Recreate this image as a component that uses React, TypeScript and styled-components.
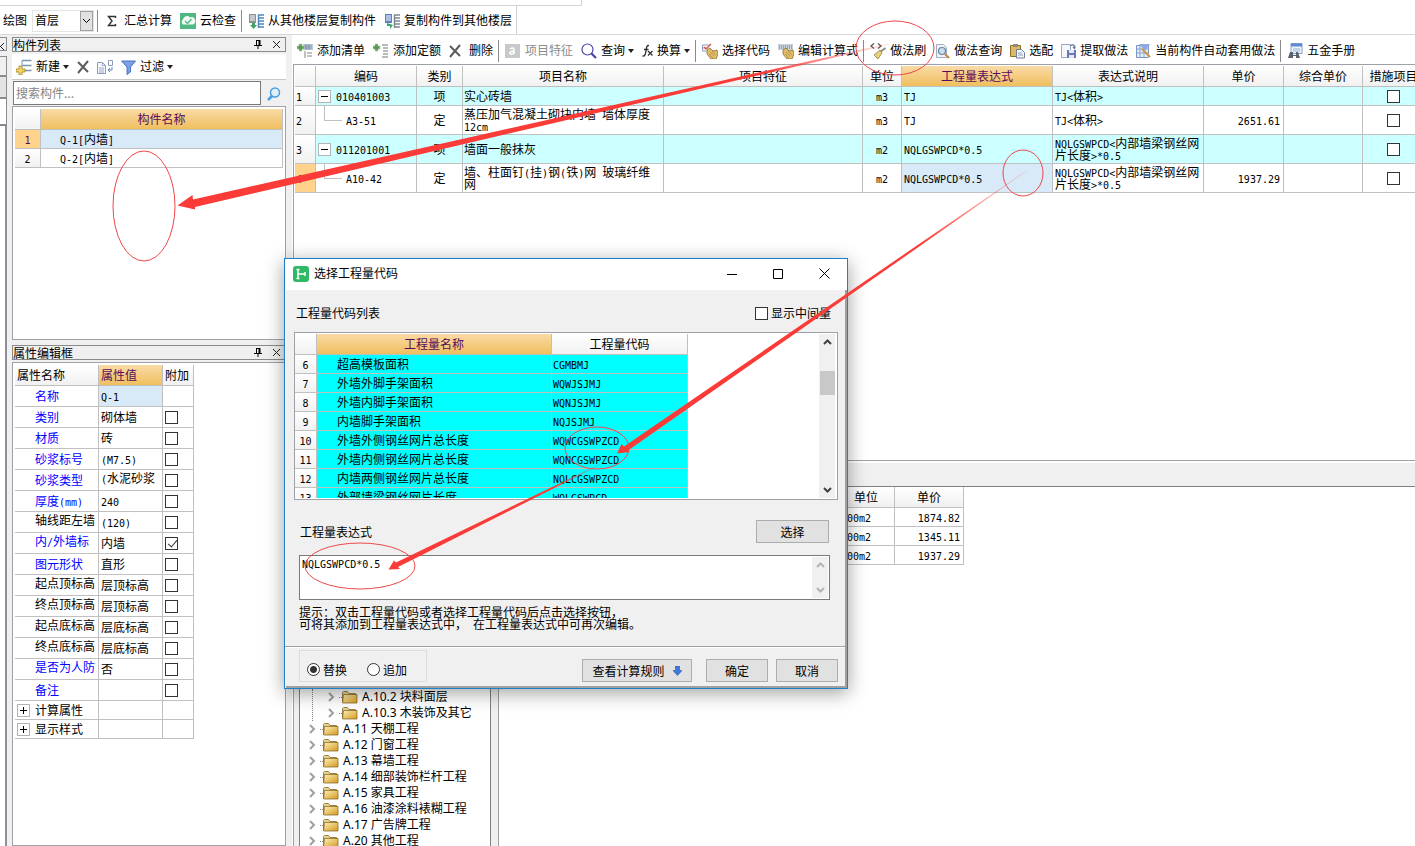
import React from "react";
import styled, { createGlobalStyle, css } from "styled-components";

const ui = '"Noto Sans", "Noto Sans CJK SC", sans-serif';
const song = '"Noto Sans CJK SC", "Noto Sans", sans-serif';
const mono = '"DejaVu Sans Mono", "Liberation Mono", monospace';
const line = "#c0c0c0";
const red = "#fb3b37";

const GlobalStyle = createGlobalStyle`
  * { box-sizing: border-box; }
  body { margin: 0; background: #fff; color: #000; font: 12px/14px ${song}; overflow: hidden; }
  button, input, select, textarea { font: inherit; color: inherit; margin: 0; }
`;

/* ---------- shared text ---------- */

const Latin = styled.span`
  font-family: ${mono};
  font-size: 10px;
  line-height: 0;
`;

function Mix({ children }: { children: string }) {
  const parts = children.split(/([\x20-\x7e]+)/).filter(Boolean);
  return (
    <>
      {parts.map((p, i) => (/^[\x20-\x7e]/.test(p) ? <Latin key={i}>{p}</Latin> : p))}
    </>
  );
}

/* ---------- shell ---------- */

const Page = styled.div`
  position: relative;
  display: flex;
  flex-direction: column;
  height: 100vh;
  overflow: hidden;
`;

const TopStrip = styled.div`
  flex: none;
  width: 582px;
  height: 6px;
  border: 1px solid #d4d4d4;
  border-width: 0 1px 1px 0;
`;

const Toolbar = styled.div`
  flex: none;
  display: flex;
  align-items: center;
  background: #fff;
  font-family: ${ui};
  white-space: nowrap;
`;

const FloorBar = styled(Toolbar)`
  height: 29px;
  border-bottom: 1px solid #d9d9d9;
`;

const FloorGroup = styled(Toolbar)`
  height: 28px;
  padding: 2px 0 0 3px;
  border-right: 1px solid #d0d0d0;
`;

const MainBar = styled(Toolbar)`
  height: 29px;
  padding: 2px 0 0 1px;
`;

const PanelBar = styled(Toolbar)`
  height: 26px;
  border-bottom: 1px solid #c8c8c8;
`;

const ToolButton = styled.button`
  display: flex;
  align-items: center;
  gap: 4px;
  height: 22px;
  padding: 0 4px;
  border: 0;
  background: none;
  &:disabled { color: #8c8c8c; }
`;

const Caret = styled.i`
  margin-left: -1px;
  border: solid transparent;
  border-width: 4px 3px 0;
  border-top-color: #222;
`;

const Separator = styled.i`
  width: 1px;
  height: 22px;
  margin: 0 2px 0 1px;
  background: #8a8a8a;
`;

const FloorLabel = styled.label`
  display: flex;
  align-items: center;
  gap: 5px;
  margin-right: 2px;
`;

const SelectBox = styled.span`
  display: flex;
  width: 62px;
  height: 22px;
  border: 1px solid #e4e4e4;
`;

const FloorSelect = styled.select`
  flex: 1;
  min-width: 0;
  padding: 0 2px;
  border: 0;
  background: #fff;
  appearance: none;
`;

const SelectArrow = styled.span`
  display: grid;
  place-items: center;
  width: 13px;
  border: 1px solid #a0a0a0;
  background: #e1e1e1;
`;

const Body = styled.div`
  flex: 1;
  min-height: 0;
  display: flex;
  background: #f0f0f0;
`;

/* ---------- cut-off dock at the far left ---------- */

const Dock = styled.div`
  flex: none;
  display: flex;
  flex-direction: column;
  width: 12px;
  padding: 2px 5px 0 0;
`;

const DockBox = styled.div<{ $h: number; $bg: string }>`
  flex: none;
  height: ${(p) => p.$h}px;
  border: 1px solid #8c8c8c;
  border-left: 0;
  background: ${(p) => p.$bg};
  overflow: hidden;
`;

const DockFill = styled.div`
  flex: 1;
  border-top: 1px solid #80808a;
  border-right: 2px solid #90909a;
  background: #fff;
`;

/* ---------- left column ---------- */

const Side = styled.div`
  flex: none;
  display: flex;
  flex-direction: column;
  width: 274px;
  padding-top: 2px;
`;

const PanelTitle = styled.h2`
  flex: none;
  display: flex;
  align-items: center;
  gap: 9px;
  height: 15px;
  margin: 0 0 2px;
  padding-right: 4px;
  border: 1px solid #8a8a8a;
  font-size: 12px;
  font-weight: 400;
  line-height: 13px;
  & > span { flex: 1; }
`;

const TitleIcon = styled.button`
  display: flex;
  width: 9px;
  height: 9px;
  padding: 0;
  border: 0;
  background: none;
`;

const SearchRow = styled.div`
  flex: none;
  display: flex;
  height: 26px;
  padding: 1px 0 0 1px;
`;

const SearchInput = styled.input`
  flex: 1;
  min-width: 0;
  height: 24px;
  padding: 0 2px 2px;
  border: 1px solid #7a7a7a;
  background: #fff;
  border-radius: 0;
  &::placeholder { color: #858585; opacity: 1; }
`;

const SearchButton = styled.button`
  display: grid;
  place-items: center;
  width: 25px;
  padding: 0;
  border: 0;
  background: #f0f0f0;
`;

const Frame = styled.div<{ $h?: number }>`
  ${(p) => (p.$h ? css`flex: none; height: ${p.$h}px;` : css`flex: 1; min-height: 0;`)}
  padding: 2px;
  border: 1px solid #a0a0a8;
  background: #fff;
  overflow: hidden;
`;

const SideGap = styled.div`
  flex: none;
  height: 5px;
`;

/* ---------- tables ---------- */

const Grid = styled.table<{ $w: number }>`
  width: ${(p) => p.$w}px;
  table-layout: fixed;
  border-collapse: separate;
  border-spacing: 0;
`;

const Head = styled.th<{ $active?: boolean; $left?: boolean }>`
  height: 21px;
  padding: 0 2px;
  border: solid ${line};
  border-width: 0 1px 1px 0;
  background: ${(p) =>
    p.$active ? "linear-gradient(#f9dba6, #f0bf5e)" : "linear-gradient(#fff, #f1f1f1)"};
  color: ${(p) => (p.$active ? "#5a0a5a" : "#000")};
  font-weight: 400;
  text-align: ${(p) => (p.$left ? "left" : "center")};
  white-space: nowrap;
  overflow: hidden;
`;

const Row = styled.tr<{ $h: number; $bg?: string }>`
  height: ${(p) => p.$h}px;
  background: ${(p) => p.$bg || "#fff"};
`;

const Cell = styled.td<{
  $align?: string;
  $pad?: number;
  $bg?: string;
  $color?: string;
  $clip?: boolean;
}>`
  padding: 0 ${(p) => (p.$align === "right" ? 3 : p.$align ? 0 : 2)}px 0 ${(p) => p.$pad ?? 2}px;
  border: solid ${line};
  border-width: 0 1px 1px 0;
  background: ${(p) => p.$bg || "transparent"};
  color: ${(p) => p.$color || "#000"};
  font-size: 12px;
  line-height: 12px;
  text-align: ${(p) => p.$align || "left"};
  vertical-align: ${(p) => (p.$clip ? "top" : "middle")};
  overflow: hidden;
  ${(p) => p.$clip && css`padding-top: 2px; white-space: nowrap;`}
`;

const RowNumber = styled(Cell)<{ $active?: boolean; $edge?: boolean }>`
  padding: 0 ${(p) => (p.$edge ? 12 : 0)}px 0 0;
  background: ${(p) => (p.$active ? "#ffd38c" : "linear-gradient(#fff, #f1f1f1)")};
  text-align: center;
`;

const CodeCell = styled.div<{ $child?: boolean }>`
  position: relative;
  display: flex;
  align-items: center;
  gap: 5px;
  padding-left: ${(p) => (p.$child ? 30 : 2)}px;
  ${(p) =>
    p.$child &&
    css`
      &::before {
        content: "";
        position: absolute;
        left: 8px;
        top: -16px;
        width: 17px;
        height: 22px;
        border: solid ${line};
        border-width: 0 0 1px 1px;
      }
    `}
`;

const ExpandBox = styled.button`
  position: relative;
  display: grid;
  place-items: center;
  width: 13px;
  height: 13px;
  padding: 0;
  border: 1px solid #b4b4b4;
  background: #fff;
`;

const GroupName = styled.div`
  display: flex;
  align-items: center;
  gap: 5px;
`;

const Check = styled.input`
  position: relative;
  display: inline-block;
  width: 13px;
  height: 13px;
  border: 1px solid #333;
  background: #fff;
  appearance: none;
  vertical-align: middle;
  &:checked::after {
    content: "";
    position: absolute;
    left: 4px;
    top: 0;
    width: 4px;
    height: 8px;
    border: solid #333;
    border-width: 0 1px 1px 0;
    transform: rotate(40deg);
  }
`;

/* ---------- main column ---------- */

const Main = styled.main`
  flex: 1;
  min-width: 0;
  display: flex;
  flex-direction: column;
  margin-left: 6px;
  background: #fff;
`;

const Upper = styled.section`
  flex: none;
  height: 397px;
  border: 1px solid #a0a0a8;
  border-right: 0;
  padding: 1px 0 0 1px;
  margin-left: 1px;
  overflow: hidden;
`;

const LowerBar = styled.div`
  flex: none;
  height: 26px;
  margin-left: 1px;
  border-top: 2px solid #fff;
  border-bottom: 1px solid #808080;
  background: #f0f0f0;
`;

const Lower = styled.section`
  flex: 1;
  min-height: 0;
  display: flex;
  margin-left: 1px;
  padding-left: 5px;
  border-left: 1px solid #a0a0a0;
  background: #f0f0f0;
`;

const TreePane = styled.nav`
  flex: none;
  width: 192px;
  padding: 202px 0 0 8px;
  border: 1px solid #808080;
  border-top: 0;
  border-bottom: 0;
  background: #fff;
  overflow: hidden;
`;

const TreeList = styled.ul<{ $nested?: boolean }>`
  margin: 0;
  padding: 0;
  list-style: none;
  ${(p) =>
    p.$nested &&
    css`
      margin-left: 4px;
      padding-left: 14px;
      border-left: 1px dotted #808080;
    `}
`;

const TreeItem = styled.li`
  display: flex;
  align-items: center;
  height: 16px;
  font-family: ${ui};
  line-height: 16px;
  white-space: nowrap;
  & > svg { flex: none; margin-right: 4px; }
`;

const RatePane = styled.div`
  flex: 1;
  min-width: 0;
  margin-left: 7px;
  border-left: 1px solid #a0a0a0;
  background: #fff;
  overflow: hidden;
`;

/* ---------- dialog ---------- */

const Dialog = styled.div`
  position: absolute;
  left: 284px;
  top: 258px;
  width: 564px;
  border: 1px solid #1e7fca;
  background: #fff;
  box-shadow: 0 4px 18px rgba(0, 0, 0, 0.38);
`;

const DialogTitle = styled.div`
  display: flex;
  align-items: center;
  height: 31px;
  padding: 0 0 2px 8px;
  font-family: ${ui};
  & > span { flex: 1; margin-left: 5px; }
`;

const WindowButton = styled.button`
  display: grid;
  place-items: center;
  width: 46px;
  height: 28px;
  padding: 0;
  border: 0;
  background: none;
`;

const DialogBody = styled.div`
  margin-left: 1px;
  padding: 16px 7px 0 8px;
  border: solid #a0a0a0;
  border-width: 0 2px 2px 0;
  background: #f0f0f0;
`;

const Between = styled.div<{ $pad: string }>`
  display: flex;
  align-items: center;
  justify-content: space-between;
  padding: ${(p) => p.$pad};
`;

const Inline = styled.label`
  display: flex;
  align-items: center;
  gap: 3px;
`;

const CodeFrame = styled(Frame)`
  display: flex;
  justify-content: space-between;
  padding: 1px 2px 1px 0;
`;

const CodeClip = styled.div`
  overflow: hidden;
`;

const ScrollBar = styled.div<{ $pale?: boolean }>`
  flex: none;
  display: flex;
  flex-direction: column;
  align-items: center;
  justify-content: space-between;
  width: 16px;
  padding: 5px 0;
  background: #f0f0f0;
  color: ${(p) => (p.$pale ? "#b4b4b4" : "#404040")};
`;

const Thumb = styled.i`
  width: 15px;
  height: 24px;
  margin-bottom: 66px;
  background: #c8c8c8;
`;

const ExprBox = styled.div`
  display: flex;
  height: 45px;
  margin: 0 8px 0 5px;
  padding: 1px;
  border: 1px solid #7a7a7a;
  background: #fff;
`;

const ExprInput = styled.textarea`
  flex: 1;
  padding: 2px 1px 1px;
  border: 0;
  background: #fff;
  font-family: ${mono};
  font-size: 10px;
  line-height: 12px;
  resize: none;
  outline: none;
  overflow: hidden;
`;

const Hint = styled.p`
  margin: 6px 0 16px 5px;
  line-height: 12px;
`;

const Footer = styled.div`
  display: flex;
  align-items: center;
  height: 40px;
  margin: 0 -7px 0 -9px;
  padding: 3px 7px 4px 14px;
  border-top: 1px solid #a0a0a0;
  box-shadow: inset 0 1px #fff;
`;

const ModeGroup = styled.fieldset`
  display: flex;
  align-items: center;
  gap: 20px;
  width: 128px;
  height: 32px;
  margin: 0 auto 0 0;
  padding: 7px 0 0 7px;
  border: 1px solid #dcdcdc;
`;

const Radio = styled.input`
  width: 13px;
  height: 13px;
  border: 1px solid #333;
  border-radius: 50%;
  background: #fff;
  appearance: none;
  &:checked { background: radial-gradient(#333 0 3px, #fff 4px); }
`;

const PushButton = styled.button<{ $w: number }>`
  display: flex;
  align-items: center;
  justify-content: center;
  gap: 8px;
  width: ${(p) => p.$w}px;
  height: 23px;
  padding: 0;
  border: 1px solid #adadad;
  background: #e1e1e1;
`;

const Buttons = styled.div`
  display: flex;
  align-self: flex-end;
  gap: 8px;
  & > :first-child { margin-right: 6px; }
`;

const Marks = styled.svg`
  position: absolute;
  left: 0;
  top: 0;
  pointer-events: none;
`;

/* ---------- icons ---------- */

type IconProps = { w?: number; children: React.ReactNode };
const Svg = ({ w = 16, children }: IconProps) => (
  <svg width={w} height={16} viewBox={`0 0 ${w} 16`} fill="none" aria-hidden="true">
    {children}
  </svg>
);

const Plus = ({ x, y, c = "#5d9a55" }: { x: number; y: number; c?: string }) => (
  <path d={`M${x + 2} ${y}h3v2h2v3h-2v2h-3v-2h-2v-3h2z`} fill={c} stroke="#b5ceb0" strokeWidth=".6" />
);

const Hand = () => (
  <>
    <path d="M5 7l3-2 3 3 4-1 1 4-2 5H9l-4-5z" fill="#e0bd6a" stroke="#8d6e2b" strokeWidth=".8" />
    <path d="M8 9l4 4M10 8l4 4M7 11l4 4" stroke="#a78335" strokeWidth=".7" />
  </>
);

const icons: Record<string, React.ReactNode> = {
  sigma: <Svg><path d="M11.500 5V3.500H4.500L8 8l-3.500 4.500h7V11" stroke="#333" strokeWidth="1.400" /></Svg>,
  cloud: (
    <Svg>
      <rect width="16" height="16" fill="#4fb883" />
      <path d="M3 11.500a3 3 0 010-5 4 4 0 017-2 3.500 3.500 0 013 7z" fill="#f4fbf7" />
      <path d="M5 8l2.500 2.500L11.500 6" stroke="#4fb883" strokeWidth="1.400" />
    </Svg>
  ),
  fromFloor: (
    <Svg>
      <path d="M1 1h7v9H1z" fill="#8c9196" /><path d="M2 3h5M2 5h5M2 7h5" stroke="#fff" />
      <path d="M10 2h6M10 5h6M10 8h6M10 11h6M10 14h6M10.500 2v13" stroke="#4f86c0" strokeWidth="1.500" />
      <path d="M4 10h3v2h2l-3.500 4L2 12h2z" fill="#3fa565" />
    </Svg>
  ),
  toFloor: (
    <Svg>
      <path d="M1 1h7v9H1z" fill="#5d82c4" /><path d="M2 3h5M2 5h5M2 7h5" stroke="#fff" />
      <path d="M10 2h6M10 5h6M10 8h6M10 11h6M10 14h6M10.500 2v13" stroke="#7d8894" strokeWidth="1.500" />
      <path d="M3 10v3h3v3l3-4" fill="#3fa565" />
    </Svg>
  ),
  create: (
    <Svg>
      <path d="M6 1.500h9.500M6 6.500h9.500M7 11.500h8.500" stroke="#7b93b5" strokeWidth="1.400" />
      <path d="M6 1.500v5" stroke="#7b93b5" />
      <path d="M3 7h3v3h3v3H6v3H3v-3H0v-3h3z" fill="#f3d566" stroke="#a38625" strokeWidth=".8" />
    </Svg>
  ),
  remove: <Svg w={12}><path d="M1 3l10 10M11 2L1 14" stroke="#5c5c5c" strokeWidth="2" /></Svg>,
  removeWide: <Svg><path d="M1 3l10 10M11 2L1 14" stroke="#5c5c5c" strokeWidth="2" /></Svg>,
  copy: (
    <Svg>
      <path d="M.5 3.500h5l3 3v8h-8z" fill="#f4f7fb" stroke="#8a9bb8" />
      <path d="M5.500 3.500v3h3M2 9h5M2 11h5M2 13h5" stroke="#9aabc6" />
      <path d="M11.500 1.500h4v5h-4z" stroke="#8a9bb8" /><path d="M15 8v3h-4M13 9l-2 2 2 2" stroke="#5f82c4" />
    </Svg>
  ),
  filter: <Svg w={15}><path d="M.5 2h14L9.500 8v5L6 15.500V8z" fill="#7ba0e6" stroke="#4a74c4" /></Svg>,
  addList: (
    <Svg>
      <path d="M6 1h10v6H6z" fill="#bcc9da" /><path d="M7 3h8M7 5h8M9 1v6M12 1v6" stroke="#71839b" strokeWidth=".7" />
      <path d="M10 10h5M10 13h5M8 8v7" stroke="#848484" /><Plus x={0} y={1} />
    </Svg>
  ),
  addQuota: (
    <Svg>
      <path d="M9 2h6M10 5h5M10 8h5M10 11h5M9 14h6" stroke="#777" strokeWidth="1.200" /><Plus x={0} y={1} />
    </Svg>
  ),
  feature: (
    <Svg>
      <rect y="1" width="15" height="14" fill="#c9c9c9" />
      <path d="M5 6q3-2 4 0v5M9 8.500c-5-1-5 3-2.500 2.500Q9 11 9 8.500" stroke="#fff" strokeWidth="1.500" />
    </Svg>
  ),
  find: (
    <Svg>
      <circle cx="6.500" cy="6.500" r="5.500" stroke="#4646a8" strokeWidth="1.200" />
      <path d="M10.500 10.500l4.500 4.500" stroke="#4646a8" strokeWidth="2.200" />
    </Svg>
  ),
  fx: (
    <Svg w={11}>
      <path d="M7 2.500C4.500 2 4.500 5 4 8s-1 5.500-3.500 5M2 6.500h4.500" stroke="#333" strokeWidth="1.400" />
      <path d="M6 8l4.500 4.500M10.500 8L6 12.500" stroke="#333" strokeWidth="1.300" />
    </Svg>
  ),
  pickCode: (
    <Svg><path d="M.5 2h8M.5 5h6M.5 2v6h4" stroke="#8a9bb8" /><path d="M2 4l2 2 5-5" stroke="#d65b4a" strokeWidth="1.300" /><Hand /></Svg>
  ),
  editExpr: (
    <Svg>
      <path d="M0 1h15v6H0z" fill="#c8d0dc" /><path d="M1 3h13M1 5h13" stroke="#6d7f97" strokeDasharray="1 1" /><Hand />
    </Svg>
  ),
  brush: (
    <Svg>
      <path d="M4 .5L1 3l3 2.500M8 .5L11 3 8 5.500" stroke="#555" strokeWidth="1.300" />
      <path d="M15.500 5L10 9" stroke="#8a8a8a" strokeWidth="1.800" />
      <path d="M10 7l2 3-4 6-4-4z" fill="#e5cf83" stroke="#9b8235" strokeWidth=".8" />
    </Svg>
  ),
  search2: (
    <Svg>
      <path d="M2.500 1.500h7l3 3v10h-10z" fill="#f0f4fa" stroke="#a0aec2" />
      <circle cx="8" cy="8" r="3.500" fill="#c7e0f0" stroke="#6b8095" strokeWidth="1.200" />
      <path d="M11 11l4 4" stroke="#c08a4a" strokeWidth="2.200" />
    </Svg>
  ),
  match: (
    <Svg w={15}>
      <path d="M.5 2.500h10v11H.5z" fill="#dfb960" stroke="#8d6e2b" /><path d="M3 1h5v3H3z" fill="#8b8b8b" />
      <path d="M6.500 6.500h5l3 3v5.500h-8z" fill="#f2f5fa" stroke="#6e7f99" /><path d="M8 10h4M8 12h5" stroke="#8fa0bd" />
    </Svg>
  ),
  extract: (
    <Svg w={15}>
      <path d="M.5 1.500h9v13h-9z" fill="#f4f7fb" stroke="#9aa9c2" />
      <path d="M6 7h9v8H6z" fill="#6c77b8" /><path d="M8 7h5v3H8zM8 12h5v3H8z" fill="#e4e8f5" />
      <path d="M9 3c3-2 5-1 5 2M12 4l2 2" stroke="#5f7499" strokeWidth="1.300" />
    </Svg>
  ),
  auto: (
    <Svg w={15}>
      <path d="M.5 2.500h12v12H.5z" fill="#e4ecfa" stroke="#7b93c4" /><path d="M.5 6h12M.5 10h12M4 2v12M8 2v12" stroke="#8ca3d1" />
      <path d="M3 1h11l-5 7z" fill="#8fa9e2" /><path d="M6 6l8 8" stroke="#c99c4a" strokeWidth="2.200" />
    </Svg>
  ),
  manual: (
    <Svg>
      <path d="M4 .5h11v10H4z" fill="#eef3fb" stroke="#86a0cc" /><path d="M4 2h11" stroke="#5f8ad1" strokeWidth="3" />
      <path d="M6 6h7M6 8h7" stroke="#9db1d3" />
      <path d="M1 15l2-6h3v3h3V9h2l2 6H9v-2H6v2z" fill="#59626e" />
    </Svg>
  ),
};

const Folder = () => (
  <svg width="31" height="16" viewBox="0 0 31 16" aria-hidden="true">
    <path d="M2 4l4 4-4 4" fill="none" stroke="#a0a0a0" strokeWidth="2" />
    <path d="M12 8.500h4" stroke="#808080" strokeDasharray="1 1" />
    <path d="M15.500 13V3.500l1-1h4l1.500 2h6.500V13z" fill="#e6d291" stroke="#9a8142" />
    <path d="M15.500 14l1-8.500h13.500v8.500z" fill="url(#folderFill)" stroke="#7c5f1c" strokeWidth=".7" />
  </svg>
);

const CrossGlyph = () => (
  <svg width="9" height="9"><path d="M1 1l7 7M8 1L1 8" stroke="#222" strokeWidth="1" /></svg>
);
const PinGlyph = () => (
  <svg width="9" height="9"><path d="M2.500 0v5.500M2 .5h4M0 5.500h8M4 6v3" stroke="#000" fill="none" /><path d="M5.500 0v6" stroke="#000" strokeWidth="2" /></svg>
);
const Chevron = ({ up, thin }: { up?: boolean; thin?: boolean }) => (
  <svg width="9" height="6" fill="none" stroke="currentColor" strokeWidth={thin ? 1 : 2}>
    <path d={up ? "M1 5l3.500-3.500L8 5" : "M1 1l3.500 3.500L8 1"} />
  </svg>
);

/* ---------- pieces ---------- */

function Tool({ icon, text, caret, disabled, label }: { icon: string; text?: string; caret?: boolean; disabled?: boolean; label?: string }) {
  return (
    <ToolButton disabled={disabled} aria-label={label}>
      {icons[icon]}
      {text}
      {caret && <Caret />}
    </ToolButton>
  );
}

function Title({ text }: { text: string }) {
  return (
    <PanelTitle>
      <span>{text}</span>
      <TitleIcon aria-label="固定"><PinGlyph /></TitleIcon>
      <TitleIcon aria-label="关闭"><CrossGlyph /></TitleIcon>
    </PanelTitle>
  );
}

const Expander = ({ plus }: { plus?: boolean }) => (
  <ExpandBox aria-label={plus ? "展开" : "折叠"}>
    <svg width="9" height="9"><path d={plus ? "M1 4.500h7M4.500 1v7" : "M1 4.500h7"} stroke="#000" /></svg>
  </ExpandBox>
);

type Prop = { name: string; value: string; blue?: boolean; box?: boolean; on?: boolean; clipName?: boolean; clipValue?: boolean };
const properties: Prop[] = [
  { name: "名称", value: "Q-1", blue: true },
  { name: "类别", value: "砌体墙", blue: true, box: true },
  { name: "材质", value: "砖", blue: true, box: true },
  { name: "砂浆标号", value: "(M7.5)", blue: true, box: true },
  { name: "砂浆类型", value: "(水泥砂浆", blue: true, box: true, clipValue: true },
  { name: "厚度(mm)", value: "240", blue: true, box: true },
  { name: "轴线距左墙", value: "(120)", box: true, clipName: true },
  { name: "内/外墙标", value: "内墙", blue: true, box: true, on: true, clipName: true },
  { name: "图元形状", value: "直形", blue: true, box: true },
  { name: "起点顶标高", value: "层顶标高", box: true, clipName: true },
  { name: "终点顶标高", value: "层顶标高", box: true, clipName: true },
  { name: "起点底标高", value: "层底标高", box: true, clipName: true },
  { name: "终点底标高", value: "层底标高", box: true, clipName: true },
  { name: "是否为人防", value: "否", blue: true, box: true, clipName: true },
  { name: "备注", value: "", blue: true, box: true },
];

const methods = [
  { code: "010401003", kind: "项", name: "实心砖墙", unit: "m3", expr: "TJ", note: "TJ<体积>", price: "" },
  { code: "A3-51", kind: "定", name: "蒸压加气混凝土砌块内墙 墙体厚度12cm", unit: "m3", expr: "TJ", note: "TJ<体积>", price: "2651.61" },
  { code: "011201001", kind: "项", name: "墙面一般抹灰", unit: "m2", expr: "NQLGSWPCD*0.5", note: "NQLGSWPCD<内部墙梁钢丝网片长度>*0.5", price: "" },
  { code: "A10-42", kind: "定", name: "墙、柱面钉(挂)钢(铁)网 玻璃纤维网", unit: "m2", expr: "NQLGSWPCD*0.5", note: "NQLGSWPCD<内部墙梁钢丝网片长度>*0.5", price: "1937.29" },
];

const codes = [
  ["6", "超高模板面积", "CGMBMJ"],
  ["7", "外墙外脚手架面积", "WQWJSJMJ"],
  ["8", "外墙内脚手架面积", "WQNJSJMJ"],
  ["9", "内墙脚手架面积", "NQJSJMJ"],
  ["10", "外墙外侧钢丝网片总长度", "WQWCGSWPZCD"],
  ["11", "外墙内侧钢丝网片总长度", "WQNCGSWPZCD"],
  ["12", "内墙两侧钢丝网片总长度", "NQLCGSWPZCD"],
  ["13", "外部墙梁钢丝网片长度", "WQLGSWPCD"],
];

const Cols = ({ of }: { of: number[] }) => (
  <colgroup>{of.map((w, i) => <col key={i} width={w} />)}</colgroup>
);

const mainCols = [21, 101, 46, 201, 199, 39, 151, 151, 80, 79, 62];
const mainHeads = ["", "编码", "类别", "项目名称", "项目特征", "单位", "工程量表达式", "表达式说明", "单价", "综合单价", "措施项目"];

function ComponentPanel() {
  return (
    <>
      <Title text="构件列表" />
      <PanelBar>
        <Tool icon="create" text="新建" caret />
        <Tool icon="remove" label="删除" />
        <Tool icon="copy" label="复制" />
        <Tool icon="filter" text="过滤" caret />
      </PanelBar>
      <SearchRow>
        <SearchInput type="search" placeholder="搜索构件..." aria-label="搜索构件" />
        <SearchButton aria-label="搜索">
          <svg width="14" height="14" fill="none">
            <circle cx="8" cy="5.500" r="4.500" fill="#dff1fb" stroke="#4a9fe0" strokeWidth="1.500" />
            <path d="M5 9l-4 4" stroke="#4a9fe0" strokeWidth="2.500" />
          </svg>
        </SearchButton>
      </SearchRow>
      <Frame $h={234}>
        <Grid $w={268}>
          <Cols of={[26, 242]} />
          <thead><tr><Head /><Head $active>构件名称</Head></tr></thead>
          <tbody>
            <Row $h={19} $bg="#d8e9f7"><RowNumber $active $color="#5a0a5a"><Mix>1</Mix></RowNumber><Cell $pad={19}><Mix>Q-1[内墙]</Mix></Cell></Row>
            <Row $h={19}><RowNumber><Mix>2</Mix></RowNumber><Cell $pad={19}><Mix>Q-2[内墙]</Mix></Cell></Row>
          </tbody>
        </Grid>
      </Frame>
    </>
  );
}

function PropertyPanel() {
  return (
    <>
      <Title text="属性编辑框" />
      <Frame>
        <Grid $w={179}>
          <Cols of={[84, 64, 31]} />
          <thead><tr><Head $left>属性名称</Head><Head $left $active>属性值</Head><Head $left>附加</Head></tr></thead>
          <tbody>
            {properties.map((p, i) => (
              <Row key={p.name} $h={21}>
                <Cell $pad={20} $color={p.blue ? "#00f" : "#000"} $clip={p.clipName}><Mix>{p.name}</Mix></Cell>
                <Cell $bg={i === 0 ? "#d8e9f7" : undefined} $clip={p.clipValue}><Mix>{p.value}</Mix></Cell>
                <Cell>{p.box && <Check type="checkbox" defaultChecked={p.on} aria-label={p.name} />}</Cell>
              </Row>
            ))}
            {["计算属性", "显示样式"].map((g) => (
              <Row key={g} $h={19}>
                <Cell><GroupName><Expander plus />{g}</GroupName></Cell>
                <Cell /><Cell />
              </Row>
            ))}
          </tbody>
        </Grid>
      </Frame>
    </>
  );
}

function MethodTable() {
  return (
    <Upper>
      <Grid $w={1130}>
        <Cols of={mainCols} />
        <thead><tr>{mainHeads.map((h, i) => <Head key={i} $active={i === 6}>{h}</Head>)}</tr></thead>
        <tbody>
          {methods.map((m, i) => {
            const parent = m.kind === "项";
            return (
              <Row key={m.code} $h={i === 0 ? 19 : 29} $bg={parent ? "#ccffff" : "#fff"}>
                <RowNumber $active={i === 3} $edge><Mix>{String(i + 1)}</Mix></RowNumber>
                <Cell $pad={0}>
                  <CodeCell $child={!parent}>{parent && <Expander />}<span><Mix>{m.code}</Mix></span></CodeCell>
                </Cell>
                <Cell $align="center" $pad={0}>{m.kind}</Cell>
                <Cell $pad={1}><Mix>{m.name}</Mix></Cell>
                <Cell />
                <Cell $align="center" $pad={0}><Mix>{m.unit}</Mix></Cell>
                <Cell $bg={i === 3 ? "#d8e9f7" : undefined}><Mix>{m.expr}</Mix></Cell>
                <Cell><Mix>{m.note}</Mix></Cell>
                <Cell $align="right"><Mix>{m.price}</Mix></Cell>
                <Cell />
                <Cell $align="center" $pad={0}><Check type="checkbox" aria-label={"措施项目 " + m.code} /></Cell>
              </Row>
            );
          })}
        </tbody>
      </Grid>
    </Upper>
  );
}

function CodeDialog() {
  return (
    <Dialog role="dialog" aria-labelledby="dialog-title">
      <DialogTitle>
        <svg width="16" height="16" fill="none">
          <rect width="16" height="16" rx="3" fill="#2fb866" />
          <path d="M5 3v10M3.500 3.500h3M3.500 12.500h3M5 8h7M12 6v4" stroke="#fff" strokeWidth="1.500" />
        </svg>
        <span id="dialog-title">选择工程量代码</span>
        <WindowButton aria-label="最小化"><svg width="10" height="10"><path d="M0 5.500h10" stroke="#000" /></svg></WindowButton>
        <WindowButton aria-label="最大化"><svg width="10" height="10"><path d="M.5.5h9v9h-9z" stroke="#000" fill="none" /></svg></WindowButton>
        <WindowButton aria-label="关闭"><svg width="11" height="11"><path d="M.5.5l10 10M10.500.5l-10 10" stroke="#000" /></svg></WindowButton>
      </DialogTitle>
      <DialogBody>
        <Between $pad="0 7px 12px 2px">
          <span>工程量代码列表</span>
          <Inline><Check type="checkbox" />显示中间量</Inline>
        </Between>
        <CodeFrame $h={168}>
          <CodeClip>
            <Grid $w={393}>
              <Cols of={[22, 235, 136]} />
              <thead><tr><Head /><Head $active>工程量名称</Head><Head>工程量代码</Head></tr></thead>
              <tbody>
                {codes.map(([n, name, code]) => (
                  <Row key={n} $h={19} $bg="#0ff">
                    <RowNumber><Mix>{n}</Mix></RowNumber>
                    <Cell $pad={20}>{name}</Cell>
                    <Cell $pad={1}><Mix>{code}</Mix></Cell>
                  </Row>
                ))}
              </tbody>
            </Grid>
          </CodeClip>
          <ScrollBar><Chevron up /><Thumb /><Chevron /></ScrollBar>
        </CodeFrame>
        <Between $pad="20px 9px 12px 6px">
          <label htmlFor="expr">工程量表达式</label>
          <PushButton $w={73}>选择</PushButton>
        </Between>
        <ExprBox>
          <ExprInput id="expr" defaultValue="NQLGSWPCD*0.5" />
          <ScrollBar $pale><Chevron up /><Chevron /></ScrollBar>
        </ExprBox>
        <Hint>
          提示：双击工程量代码或者选择工程量代码后点击选择按钮，
          <br />
          可将其添加到工程量表达式中，<Mix>{" "}</Mix>在工程量表达式中可再次编辑。
        </Hint>
        <Footer>
          <ModeGroup>
            <Inline><Radio type="radio" name="mode" defaultChecked />替换</Inline>
            <Inline><Radio type="radio" name="mode" />追加</Inline>
          </ModeGroup>
          <Buttons>
            <PushButton $w={110}>
              查看计算规则
              <svg width="9" height="10"><path d="M2.500 0h4v4.500H9L4.500 9.500 0 4.500h2.500z" fill="#3f78dc" stroke="#2a56ac" strokeWidth=".6" /></svg>
            </PushButton>
            <PushButton $w={62}>确定</PushButton>
            <PushButton $w={62}>取消</PushButton>
          </Buttons>
        </Footer>
      </DialogBody>
    </Dialog>
  );
}

function Annotations() {
  return (
    <Marks width="1415" height="846" viewBox="0 0 1415 846" fill="none" aria-hidden="true">
      <defs>
        <linearGradient id="fadeA" gradientUnits="userSpaceOnUse" x1="890" y1="44" x2="760" y2="73">
          <stop offset="0" stopColor={red} stopOpacity=".1" /><stop offset="1" stopColor={red} />
        </linearGradient>
        <linearGradient id="fadeB" gradientUnits="userSpaceOnUse" x1="1027" y1="170" x2="920" y2="244">
          <stop offset="0" stopColor={red} stopOpacity=".1" /><stop offset="1" stopColor={red} />
        </linearGradient>
        <linearGradient id="fadeC" gradientUnits="userSpaceOnUse" x1="604" y1="463" x2="550" y2="490">
          <stop offset="0" stopColor={red} stopOpacity=".1" /><stop offset="1" stopColor={red} />
        </linearGradient>
        <linearGradient id="folderFill" x1="0" y1="0" x2="1" y2="1">
          <stop offset="0" stopColor="#fdf0b8" /><stop offset="1" stopColor="#d69a1e" />
        </linearGradient>
      </defs>
      <path d="M888 43.500L193 199.500 192.500 195 177.500 205.500 195 209.500 195 207 888 45z" fill="url(#fadeA)" />
      <path d="M1027 170L624 446.500 621.500 444 617 453.500 630 452 628 450.500 1027 171z" fill="url(#fadeB)" />
      <path d="M606 461L396 562.500 394 560.500 388.500 569.500 400 569 398 567 606 462z" fill="url(#fadeC)" />
      <g stroke="#f0474a" strokeWidth="1">
        <ellipse cx="144" cy="206" rx="31" ry="55" />
        <ellipse cx="895" cy="48" rx="39" ry="27" />
        <ellipse cx="1023" cy="173" rx="20" ry="23" />
        <ellipse cx="597" cy="448" rx="32" ry="21" />
        <ellipse cx="360" cy="566" rx="55" ry="23" />
      </g>
    </Marks>
  );
}

export default function App() {
  return (
    <Page>
      <GlobalStyle />
      <TopStrip />
      <FloorBar>
        <FloorGroup>
          <FloorLabel>
            绘图
            <SelectBox>
              <FloorSelect><option>首层</option></FloorSelect>
              <SelectArrow><Chevron thin /></SelectArrow>
            </SelectBox>
          </FloorLabel>
          <Separator />
          <Tool icon="sigma" text="汇总计算" />
          <Tool icon="cloud" text="云检查" />
          <Separator />
          <Tool icon="fromFloor" text="从其他楼层复制构件" />
          <Tool icon="toFloor" text="复制构件到其他楼层" />
        </FloorGroup>
      </FloorBar>
      <Body>
        <Dock>
          <DockBox $h={14} $bg="#f0f0f0">
            <svg width="4" height="9"><path d="M-3 2l7 7M4 2l-7 7" stroke="#222" /></svg>
          </DockBox>
          <SideGap />
          <DockBox $h={20} $bg="#f0f0f0" />
          <DockBox $h={22} $bg="#e4e4e4" />
          <DockBox $h={27} $bg="#fff" />
          <DockFill />
        </Dock>
        <Side>
          <ComponentPanel />
          <SideGap />
          <PropertyPanel />
        </Side>
        <Main>
          <MainBar>
            <Tool icon="addList" text="添加清单" />
            <Tool icon="addQuota" text="添加定额" />
            <Tool icon="removeWide" text="删除" />
            <Separator />
            <Tool icon="feature" text="项目特征" disabled />
            <Tool icon="find" text="查询" caret />
            <Tool icon="fx" text="换算" caret />
            <Separator />
            <Tool icon="pickCode" text="选择代码" />
            <Tool icon="editExpr" text="编辑计算式" />
            <Separator />
            <Tool icon="brush" text="做法刷" />
            <Tool icon="search2" text="做法查询" />
            <Tool icon="match" text="选配" />
            <Tool icon="extract" text="提取做法" />
            <Tool icon="auto" text="当前构件自动套用做法" />
            <Separator />
            <Tool icon="manual" text="五金手册" />
          </MainBar>
          <MethodTable />
          <LowerBar />
          <Lower>
            <TreePane>
              <TreeList $nested>
                <TreeItem><Folder />A.10.2 块料面层</TreeItem>
                <TreeItem><Folder />A.10.3 木装饰及其它</TreeItem>
              </TreeList>
              <TreeList>
                {["A.11 天棚工程", "A.12 门窗工程", "A.13 幕墙工程", "A.14 细部装饰栏杆工程", "A.15 家具工程", "A.16 油漆涂料裱糊工程", "A.17 广告牌工程", "A.20 其他工程"].map((t) => (
                  <TreeItem key={t}><Folder />{t}</TreeItem>
                ))}
              </TreeList>
            </TreePane>
            <RatePane>
              <Grid $w={465}>
                <Cols of={[339, 57, 69]} />
                <thead><tr><Head /><Head>单位</Head><Head>单价</Head></tr></thead>
                <tbody>
                  {["1874.82", "1345.11", "1937.29"].map((v) => (
                    <Row key={v} $h={19}>
                      <Cell /><Cell $pad={3}><Mix>100m2</Mix></Cell><Cell $align="right"><Mix>{v}</Mix></Cell>
                    </Row>
                  ))}
                </tbody>
              </Grid>
            </RatePane>
          </Lower>
        </Main>
      </Body>
      <CodeDialog />
      <Annotations />
    </Page>
  );
}
